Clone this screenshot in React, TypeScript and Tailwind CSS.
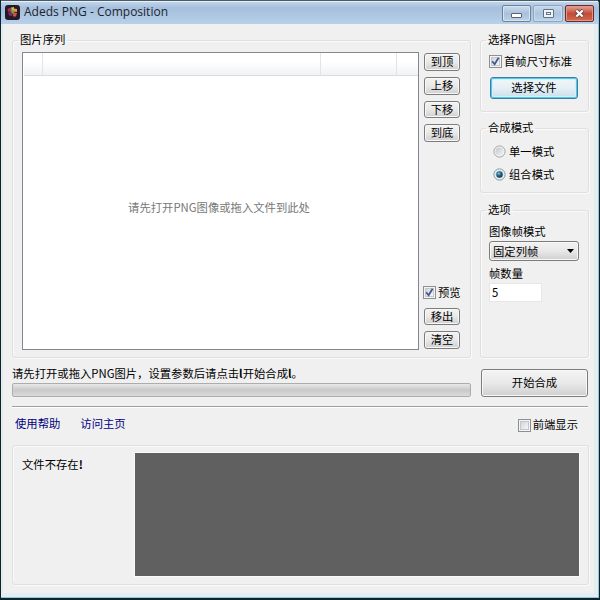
import type { ReactNode } from "react"

function Group({ title, className, children }: { title: string; className: string; children: ReactNode }) {
  return (
    <fieldset className={`rounded-[3px] border border-[#dfdfdf] shadow-[inset_1px_1px_0_#fafafa,1px_1px_0_#fafafa] ${className}`}>
      <legend className="ml-[5px] h-4 px-[2px] leading-[14px]">{title}</legend>
      {children}
    </fieldset>
  )
}

function Button({ className, children }: { className: string; children: ReactNode }) {
  return (
    <button
      type="button"
      className={`flex items-center justify-center rounded-[3px] border border-[#7c7c7c] bg-linear-to-b from-[#f3f3f3] via-[#e9e9e9] via-50% to-[#cfcfcf] pb-[2px] shadow-[inset_0_0_0_1px_#f8f8f8] ${className}`}
    >
      {children}
    </button>
  )
}

function Checkbox({ label, checked, className = "" }: { label: string; checked?: boolean; className?: string }) {
  return (
    <div className={`flex h-[13px] items-center gap-[2px] ${className}`}>
      <span className="flex size-[13px] shrink-0 items-center justify-center border border-[#8e8f8f] bg-[#f4f4f4]">
        <span className="flex size-[9px] items-center justify-center border border-[#c3c7cb] bg-linear-to-br from-[#d2d6da] to-[#f6f6f6]">
          {checked && (
            <svg viewBox="0 0 9 9" className="size-[9px] shrink-0 overflow-visible">
              <path d="M1.2 4.2 3.6 7.2 7.6 0.8" fill="none" stroke="#3f5794" strokeWidth="1.8" />
            </svg>
          )}
        </span>
      </span>
      <span className="-mt-[2px] whitespace-nowrap">{label}</span>
    </div>
  )
}

function Radio({ label, checked }: { label: string; checked?: boolean }) {
  return (
    <div className="flex h-[13px] items-center gap-[3px]">
      <svg viewBox="0 0 13 13" className="size-[13px] shrink-0">
        <defs>
          <radialGradient id="radio-dot" cx="0.4" cy="0.35" r="0.7">
            <stop offset="0" stopColor="#a4d8ec" />
            <stop offset="0.35" stopColor="#34738f" />
            <stop offset="1" stopColor="#0c2f47" />
          </radialGradient>
          <linearGradient id="radio-off" x1="0" y1="0" x2="1" y2="1">
            <stop offset="0" stopColor="#c2c6c9" />
            <stop offset="1" stopColor="#f5f5f5" />
          </linearGradient>
        </defs>
        <circle cx="6.5" cy="6.5" r="5.6" fill="#f4f4f4" stroke={checked ? "#6f8c9d" : "#9a9c9c"} strokeWidth="0.9" />
        <circle cx="6.5" cy="6.5" r="4.1" fill={checked ? "#c4dfeb" : "url(#radio-off)"} />
        {checked && <circle cx="6.5" cy="6.5" r="3.2" fill="url(#radio-dot)" />}
      </svg>
      <span className="-mt-px">{label}</span>
    </div>
  )
}

function TitleBar() {
  return (
    <header className="flex h-6 shrink-0 items-start border-t border-[#4a5a68] bg-linear-to-b from-[#c5d8ec] via-[#a5bfdc] via-30% to-[#b8d0e9] pr-1 pl-1 shadow-[inset_0_1px_0_#e6f0f8]">
      <svg viewBox="0 0 15 15" className="mt-[4px] size-[15px]">
        <rect x="0.5" y="0.5" width="14" height="14" rx="2" fill="#2a1626" stroke="#1c1c2c" />
        <path d="M2.5 4 6 2.5 7 7 3 6.5Z" fill="#a8344c" />
        <path d="M6 2.5 9 2 9 6 7 7Z" fill="#b9c247" />
        <path d="M9 3.5 12 4 12 7 8.5 6.5Z" fill="#d9a23c" />
        <path d="M3 7.5 7 7 7 11 4 10.5Z" fill="#7a2f6d" />
        <path d="M7.5 7 12 8 11 11.5 8 11.5Z" fill="#c4574a" />
        <path d="M6 5.5 8.5 5 9 8 7 8.5Z" fill="#6fa84c" />
      </svg>
      <h1 className="mt-[2px] ml-[4px] flex-1 font-['Open_Sans',sans-serif] text-[12px] leading-[18px] text-[#1b2430]">
        Adeds PNG - Composition
      </h1>
      <div className="mt-1 flex gap-[2px]">
        <span className="flex h-[17px] w-[29px] items-center justify-center rounded-[2px] border border-[#6d8199] bg-linear-to-b from-[#cbdcee] via-[#a9c0da] via-50% to-[#bdd3eb] shadow-[inset_0_0_0_1px_#d6e4f2]">
          <span className="mt-1 h-[5px] w-[11px] rounded-[1px] border border-[#59616d] bg-white" />
        </span>
        <span className="flex h-[17px] w-[30px] items-center justify-center rounded-[2px] border border-[#8fa6c0] bg-linear-to-b from-[#c6d8ec] via-[#adc4de] via-50% to-[#bdd3eb] shadow-[inset_0_0_0_1px_#c8daec]">
          <span className="flex h-[9px] w-[11px] items-center justify-center rounded-[1px] border border-[#66717f] bg-[#edf3f8]">
            <span className="h-[3px] w-[5px] border border-[#66717f]" />
          </span>
        </span>
        <span className="flex h-[17px] w-[29px] items-center justify-center rounded-[2px] border border-[#6f2a26] bg-linear-to-b from-[#e2a498] via-[#c34a36] via-50% to-[#cf6a50] shadow-[inset_0_0_0_1px_#dc9a8c]">
          <svg viewBox="0 0 11 9" className="h-[9px] w-[11px]">
            <path d="M2 1.3 9 7.7M9 1.3 2 7.7" stroke="#6b3f43" strokeWidth="3.8" />
            <path d="M2.3 1.5 8.7 7.5M8.7 1.5 2.3 7.5" stroke="#fff" strokeWidth="2.2" />
          </svg>
        </span>
      </div>
    </header>
  )
}

function SequencePanel() {
  return (
    <Group title="图片序列" className="flex h-[326px] w-[459px]">
      <div className="mt-1 ml-[9px] flex h-[298px] w-[397px] flex-col border border-[#828790] bg-white">
        <div className="ml-px flex h-[23px] border-b border-[#d9dbde] bg-linear-to-b from-white from-40% to-[#f0f2f4]">
          <div className="w-[19px] border-r border-[#e2e4e6]" />
          <div className="w-[278px] border-r border-[#e2e4e6]" />
          <div className="w-[76px] border-r border-[#e2e4e6]" />
        </div>
        <p className="mt-[123px] pr-[3px] text-center text-[#777777]">请先打开PNG图像或拖入文件到此处</p>
      </div>
      <div className="mt-[5px] ml-[5px] flex h-[296px] w-[36px] flex-col">
        <div className="flex flex-col gap-[6px]">
          <Button className="h-[18px] w-[36px]">到顶</Button>
          <Button className="h-[18px] w-[36px]">上移</Button>
          <Button className="h-[17px] w-[36px]">下移</Button>
          <Button className="h-[18px] w-[36px]">到底</Button>
        </div>
        <Checkbox label="预览" checked className="mt-auto -ml-px" />
        <Button className="mt-[9px] h-[17px] w-[36px]">移出</Button>
        <Button className="mt-[6px] h-[18px] w-[36px]">清空</Button>
      </div>
    </Group>
  )
}

function SettingsColumn() {
  return (
    <div className="flex w-[109px] flex-col">
      <Group title="选择PNG图片" className="h-[80px]">
        <div className="pt-[7px] pl-[8px]">
          <Checkbox label="首帧尺寸标准" checked />
          <button
            type="button"
            className="mt-[9px] ml-px flex h-[22px] w-[88px] items-center justify-center rounded-[3px] border border-[#3c7f9f] bg-linear-to-b from-[#f0f6f8] via-[#e5f0f5] via-50% to-[#c9dfe9] pb-[2px] shadow-[inset_0_0_0_1px_#4fc8ec,inset_0_0_0_2px_#d3f0fa]"
          >
            选择文件
          </button>
        </div>
      </Group>
      <Group title="合成模式" className="mt-2 h-[73px]">
        <div className="flex flex-col gap-[10px] pt-[9px] pl-[12px]">
          <Radio label="单一模式" />
          <Radio label="组合模式" checked />
        </div>
      </Group>
      <Group title="选项" className="mt-[9px] h-[156px]">
        <div className="flex flex-col items-start pt-[5px] pl-[8px]">
          <span className="leading-4">图像帧模式</span>
          <div className="mt-[2px] flex h-5 w-[90px] items-center justify-between rounded-[3px] border border-[#7c7c7c] bg-linear-to-b from-[#f2f2f2] via-[#e8e8e8] via-50% to-[#cfcfcf] pr-1 pl-[3px] shadow-[inset_0_0_0_1px_#f8f8f8]">
            <span>固定列帧</span>
            <svg viewBox="0 0 7 4" className="h-1 w-[7px]">
              <path d="M0 0H7L3.5 4Z" fill="#000" />
            </svg>
          </div>
          <span className="mt-[4px] leading-4">帧数量</span>
          <div className="mt-[2px] flex h-[19px] w-[53px] items-center border border-[#e7e7e7] bg-white pb-px pl-[2px]">5</div>
        </div>
      </Group>
    </div>
  )
}

export default function App() {
  return (
    <div className="h-[600px] w-[600px] overflow-hidden bg-[#0b2430] pr-px pb-[2px] pl-px font-['Noto_Sans_CJK_SC',sans-serif] text-[11.33px] leading-4 text-black">
      <div className="flex h-[598px] flex-col rounded-t-[4px] border-r border-b border-[#9cc3d2] bg-[#e3eef3]">
        <TitleBar />
        <main className="mr-[4px] mb-[4px] ml-px flex flex-1 flex-col border-l border-[#e6e6e6] bg-[#f0f0f0] pt-2 pl-[9px]">
          <div className="flex gap-[9px]">
            <SequencePanel />
            <SettingsColumn />
          </div>

          <div className="flex h-[39px] gap-[10px]">
            <div className="w-[459px] pt-[7px]">
              <p className="whitespace-nowrap">
                请先打开或拖入PNG图片，设置参数后请点击<b>l</b>开始合成<b>l</b>。
              </p>
              <div className="mt-[2px] h-[14px] rounded-[2px] border border-[#adadad] bg-linear-to-b from-[#e8e8e8] via-[#c9c9c9] via-50% to-[#dadada]" />
            </div>
            <Button className="mt-[11px] h-[28px] w-[107px]">开始合成</Button>
          </div>

          <hr className="mt-[9px] w-[576px] border-t border-[#a0a0a0] shadow-[0_1px_0_#fff]" />

          <div className="mt-[9px] flex h-[18px] w-[576px] items-center pr-[10px] pl-[3px]">
            <a className="pb-[4px] text-[#00007f]">使用帮助</a>
            <a className="ml-5 pb-[4px] text-[#00007f]">访问主页</a>
            <Checkbox label="前端显示" className="ml-auto" />
          </div>

          <div className="mt-[11px] flex h-[140px] w-[577px] rounded-[3px] border border-[#dfdfdf] pt-[7px] pl-[9px] shadow-[inset_1px_1px_0_#fafafa,1px_1px_0_#fafafa]">
            <p className="mt-[3px] w-[113px] pl-px -ml-px">文件不存在<b>!</b></p>
            <div className="ml-px h-[123px] w-[444px] bg-[#606060] shadow-[0_0_0_1px_#fafafa]" />
          </div>
        </main>
      </div>
    </div>
  )
}
